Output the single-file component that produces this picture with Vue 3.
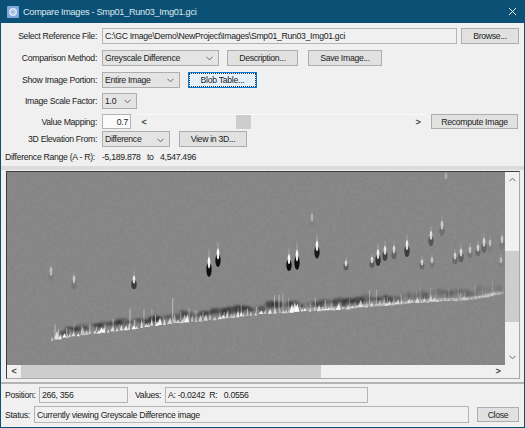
<script setup>
import { computed } from 'vue'

// isolated peaks in the image, in window coordinates: x, y, height scale, contrast
const peaks = [
  [218, 257, 1.1, 1], [209, 266, 1.2, 1], [134, 282, 0.8, 0.8], [74, 282, 0.8, 0.35], [51, 274, 0.9, 0.25],
  [289, 262, 1, 1], [297, 259, 1.2, 1], [317, 249, 1.05, 0.95], [346, 265, 0.6, 0.55], [312, 220, 0.8, 0.15],
  [372, 262, 0.65, 0.55], [378, 257, 1, 0.85], [385, 253, 0.9, 0.7], [394, 252, 0.8, 0.5], [407, 248, 1, 0.8],
  [422, 264, 0.6, 0.45], [432, 262, 0.6, 0.35], [431, 238, 0.9, 0.6], [442, 228, 0.9, 0.4], [455, 258, 0.7, 0.45],
  [461, 255, 0.8, 0.55], [470, 252, 0.7, 0.35], [478, 250, 0.7, 0.45], [484, 245, 0.9, 0.5], [490, 245, 0.7, 0.25],
  [502, 242, 0.8, 0.3], [501, 262, 0.6, 0.22], [446, 178, 0.7, 0.12],
].map(([x, y, s, c]) => ({ x, y, s, dark: c * c, light: Math.sqrt(c) * 0.95 }))

const track = [[50, 340], [87, 334], [123, 330], [173, 323], [227, 318], [260, 314], [340, 309], [407, 303], [473, 299], [505, 293]]

function bandY(x) {
  for (let i = 1; i < track.length; i++) {
    if (x <= track[i][0]) {
      const [x0, y0] = track[i - 1]
      const [x1, y1] = track[i]
      return y0 + ((x - x0) / (x1 - x0)) * (y1 - y0)
    }
  }
  return track[track.length - 1][1]
}

let seed = 23
const rnd = () => {
  seed = (seed * 16807) % 2147483647
  return seed / 2147483647
}

const fade = (x) => (x < 300 ? 1 : Math.max(0.4, 1 - ((x - 300) / 205) * 0.6))
const darkFade = (x) => (x < 340 ? 0.85 : Math.max(0.15, 0.85 - ((x - 340) / 165) * 0.7))

const darks = computed(() => {
  const out = []
  let x = 62
  while (x < 505) {
    out.push({
      x,
      y: bandY(x) - 5 - rnd() * 4,
      rx: 2 + rnd() * 5,
      ry: 1.2 + rnd() * 2.8,
      o: (0.25 + rnd() * 0.75) * darkFade(x),
    })
    x += 3 + rnd() * 5
  }
  return out
})

const wedges = computed(() => {
  const out = []
  let x = 52
  while (x < 505) {
    const y = bandY(x) + 0.5 + (rnd() - 0.5) * 1.5
    const big = x < 300 ? 1 : 0.65
    const h = (3 + rnd() * rnd() * 11) * big
    const w = 1 + rnd() * 1.7
    out.push({
      points: `${x - w},${y} ${x + w},${y} ${x + w * 0.2},${y - h}`,
      o: (0.45 + rnd() * 0.55) * fade(x),
    })
    x += 2.2 + rnd() * 3.2
  }
  return out
})

const hairs = computed(() => {
  const out = []
  let x = 55
  while (x < 505) {
    const tall = 6 + rnd() * rnd() * (x < 300 ? 22 : 14)
    out.push({
      x,
      y1: bandY(x) - 2,
      y2: bandY(x) - tall,
      o: (0.2 + rnd() * 0.5) * fade(x),
    })
    x += 3 + rnd() * 8
  }
  return out
})

const paleLine = computed(() => {
  const pts = []
  for (let x = 300; x <= 505; x += 10) pts.push(`${x},${bandY(x) - 1 + (rnd() - 0.5) * 1.5}`)
  return pts.join(' ')
})
</script>

<template>
  <div class="window">
    <div class="titlebar">
      <svg class="app-icon" viewBox="0 0 12 12">
        <rect width="12" height="12" rx="1" fill="#7fa6dd" />
        <circle cx="6" cy="6" r="4" fill="#e4edf9" />
        <path d="M6 2.5v7M2.5 6h7M3.6 3.6l4.8 4.8M8.4 3.6l-4.8 4.8" stroke="#7fa6dd" stroke-width="0.7" />
      </svg>
      <span class="title">Compare Images - Smp01_Run03_Img01.gci</span>
      <svg class="close-x" viewBox="0 0 10 10">
        <path d="M1 1l8 8M9 1l-8 8" stroke="#fff" stroke-width="1" fill="none" />
      </svg>
    </div>

    <div class="form">
      <div class="row r1">
        <label>Select Reference File:</label>
        <div class="field file">C:\GC Image\Demo\NewProject\Images\Smp01_Run03_Img01.gci</div>
        <button class="btn browse">Browse...</button>
      </div>
      <div class="row r2">
        <label>Comparison Method:</label>
        <div class="combo w-method">Greyscale Difference
          <svg viewBox="0 0 8 5"><path d="M.5.5L4 4 7.500.5" /></svg>
        </div>
        <button class="btn desc">Description...</button>
        <button class="btn save">Save Image...</button>
      </div>
      <div class="row r3">
        <label>Show Image Portion:</label>
        <div class="combo w-portion">Entire Image
          <svg viewBox="0 0 8 5"><path d="M.5.5L4 4 7.500.5" /></svg>
        </div>
        <button class="btn blob"><span>Blob Table...</span></button>
      </div>
      <div class="row r4">
        <label>Image Scale Factor:</label>
        <div class="combo w-scale">1.0
          <svg viewBox="0 0 8 5"><path d="M.5.5L4 4 7.500.5" /></svg>
        </div>
      </div>
      <div class="row r5">
        <label>Value Mapping:</label>
        <div class="field value">0.7</div>
        <div class="hscroll slider">
          <span class="arrow">&lt;</span>
          <div class="slide-track"><div class="slide-thumb"></div></div>
          <span class="arrow">&gt;</span>
        </div>
        <button class="btn recompute">Recompute Image</button>
      </div>
      <div class="row r6">
        <label>3D Elevation From:</label>
        <div class="combo w-elev">Difference
          <svg viewBox="0 0 8 5"><path d="M.5.5L4 4 7.500.5" /></svg>
        </div>
        <button class="btn view3d">View in 3D...</button>
      </div>
      <div class="row r7">
        <span class="range-label">Difference Range (A - R):</span>
        <span class="range-a">-5,189.878</span>
        <span class="range-to">to</span>
        <span class="range-b">4,547.496</span>
      </div>
    </div>

    <div class="sep"></div>

    <div class="viewer">
      <div class="canvas">
        <svg class="plot" width="498" height="193" viewBox="7 172 498 193">
          <defs>
            <filter id="grain" x="0" y="0" width="100%" height="100%">
              <feTurbulence type="fractalNoise" baseFrequency="0.3" numOctaves="2" seed="4" />
              <feColorMatrix type="matrix" values="0 0 0 0 .42  0 0 0 0 .42  0 0 0 0 .42  .9 0 0 0 -.3" />
            </filter>
            <filter id="soft" x="-30%" y="-30%" width="160%" height="160%">
              <feGaussianBlur stdDeviation="0.5" />
            </filter>
            <filter id="softer" x="-10%" y="-60%" width="120%" height="220%">
              <feGaussianBlur stdDeviation="1" />
            </filter>
          </defs>
          <rect x="7" y="172" width="498" height="193" fill="#858585" />
          <rect x="7" y="172" width="498" height="193" filter="url(#grain)" opacity="0.3" />
          <g filter="url(#softer)">
            <ellipse v-for="(d, i) in darks" :key="'d' + i" :cx="d.x" :cy="d.y" :rx="d.rx" :ry="d.ry" fill="#2c2c2c" :opacity="d.o" />
          </g>
          <polyline :points="paleLine" fill="none" stroke="#bcbcbc" stroke-width="3" opacity="0.55" filter="url(#soft)" />
          <g filter="url(#soft)">
            <line v-for="(h, i) in hairs" :key="'h' + i" :x1="h.x" :x2="h.x" :y1="h.y1" :y2="h.y2"
              stroke="#e0e0e0" stroke-width="1" :opacity="h.o" />
            <polygon v-for="(w, i) in wedges" :key="'w' + i" :points="w.points" fill="#ffffff" :opacity="w.o" />
            <g v-for="(p, i) in peaks" :key="'p' + i">
              <ellipse :cx="p.x" :cy="p.y + 3 * p.s" rx="2.600" :ry="6 * p.s" fill="#0c0c0c" :opacity="p.dark" />
              <ellipse :cx="p.x" :cy="p.y - 3 * p.s" rx="1.300" :ry="5 * p.s" fill="#ffffff" :opacity="p.light" />
              <ellipse :cx="p.x" :cy="p.y - 10 * p.s" rx="0.800" :ry="4 * p.s" fill="#b0b0b0" :opacity="p.light * 0.6" />
            </g>
          </g>
        </svg>
        <div class="vscroll">
          <svg viewBox="0 0 8 5"><path d="M.5 4.500L4 1l3.500 3.500" /></svg>
          <div class="v-track"><div class="v-thumb"></div></div>
          <svg viewBox="0 0 8 5"><path d="M.5.5L4 4 7.500.5" /></svg>
        </div>
        <div class="hscroll image-h">
          <span class="arrow">&lt;</span>
          <div class="h-track"><div class="h-thumb"></div></div>
          <span class="arrow">&gt;</span>
        </div>
        <div class="corner"></div>
      </div>
    </div>

    <div class="footer">
      <div class="row foot1">
        <label class="pos-label">Position:</label>
        <div class="field pos">266, 356</div>
        <label class="val-label">Values:</label>
        <div class="field vals">A: -0.0242&nbsp; R:&nbsp;&nbsp; 0.0556</div>
      </div>
      <div class="row foot2">
        <label class="stat-label">Status:</label>
        <div class="field status">Currently viewing Greyscale Difference image</div>
        <button class="btn close">Close</button>
      </div>
    </div>
  </div>
</template>

<style>
html, body {
  margin: 0;
  background: #f0f0f0;
}
</style>

<style scoped>
.window {
  width: 525px;
  height: 428px;
  box-sizing: border-box;
  border: 1px solid #0b5070;
  border-top: none;
  background: #f0f0f0;
  display: flex;
  flex-direction: column;
  font-family: "Liberation Sans", Arial, sans-serif;
  font-size: 8.7px;
  letter-spacing: -0.3px;
  color: #222;
  overflow: hidden;
}

.titlebar {
  height: 23px;
  flex: none;
  background: #0b5175;
  color: #dfe8ee;
  display: flex;
  align-items: center;
  padding: 0 6px;
  font-size: 9.2px;
}

.app-icon {
  width: 12px;
  height: 12px;
  margin-right: 4px;
}

.title {
  flex: 1;
}

.close-x {
  width: 9px;
  height: 9px;
  margin-right: 1px;
}

.form {
  padding-top: 5px;
  height: 143px;
  flex: none;
  box-sizing: border-box;
}

.row {
  display: flex;
  align-items: center;
}

.form label {
  width: 96px;
  text-align: right;
  margin-right: 5px;
  flex: none;
  white-space: nowrap;
}

.r1 { height: 15px; }
.r2 { height: 15px; margin-top: 7px; }
.r3 { height: 15px; margin-top: 7px; }
.r4 { height: 15px; margin-top: 6px; }
.r5 { height: 15px; margin-top: 6px; }
.r6 { height: 16px; margin-top: 2px; }
.r7 { height: 14px; margin-top: 3px; padding-left: 4px; }

.field {
  box-sizing: border-box;
  border: 1px solid #b4b4b4;
  background: #f0f0f0;
  height: 100%;
  display: flex;
  align-items: center;
  padding: 0 2px;
  white-space: pre;
}

.file {
  width: 355px;
  height: 16px;
}

.browse {
  width: 58px;
  margin-left: 4px;
}

.btn {
  box-sizing: border-box;
  height: 16px;
  border: 1px solid #adadad;
  background: #e1e1e1;
  font: inherit;
  letter-spacing: inherit;
  color: inherit;
  padding: 0;
  display: flex;
  align-items: center;
  justify-content: center;
  flex: none;
}

.combo {
  box-sizing: border-box;
  height: 16px;
  border: 1px solid #adadad;
  background: #e4e4e4;
  padding: 0 2px;
  display: flex;
  align-items: center;
  justify-content: space-between;
  flex: none;
}

.combo svg,
.vscroll svg {
  width: 7px;
  height: 5px;
  fill: none;
  stroke: #555;
  stroke-width: 1;
}

.combo svg {
  margin-right: 3px;
  margin-top: 2px;
}

.w-method { width: 117px; }
.w-portion { width: 78px; }
.w-scale { width: 35px; }
.w-elev { width: 68px; }

.desc { width: 71px; margin-left: 8px; }
.save { width: 74px; margin-left: 10px; }

.blob {
  width: 69px;
  margin-left: 8px;
  background: #e5f1fb;
  border-color: #0078d7;
}

.blob span {
  display: flex;
  align-items: center;
  justify-content: center;
  width: 100%;
  height: 100%;
  box-sizing: border-box;
  border: 1px dotted #333;
}

.value {
  width: 29px;
  background: #fbfbfb;
  justify-content: flex-end;
}

.hscroll {
  display: flex;
  align-items: center;
  background: #f0f0f0;
}

.arrow {
  width: 14px;
  text-align: center;
  flex: none;
  font-size: 9px;
  font-weight: 700;
  color: #444;
  line-height: 1;
}

.slider {
  width: 288px;
  height: 15px;
  margin-left: 6px;
  flex: none;
  border-top: 1px solid #fafafa;
  box-sizing: border-box;
}

.slide-track {
  flex: 1;
  height: 100%;
  display: flex;
}

.slide-thumb {
  width: 15px;
  margin-left: 85px;
  background: #cdcdcd;
}

.recompute {
  width: 87px;
  height: 15px;
  margin-left: 6px;
}

.view3d {
  width: 68px;
  margin-left: 9px;
}

.range-label { width: 97px; white-space: nowrap; }
.range-a { width: 45px; }
.range-to { width: 13px; }

.sep {
  height: 4px;
  flex: none;
  background: #dcdcdc;
  margin-bottom: 1px;
}

.viewer {
  flex: none;
  padding: 0 0 0 5px;
}

.canvas {
  width: 514px;
  height: 208px;
  box-sizing: border-box;
  border: 1px solid #a8a8a8;
  border-left: 1px solid #3c3c3c;
  border-top-color: #3c3c3c;
  display: grid;
  grid-template-columns: 498px 1fr;
  grid-template-rows: 193px 1fr;
  background: #f0f0f0;
}

.plot {
  display: block;
}

.vscroll {
  display: flex;
  flex-direction: column;
  align-items: center;
  background: #f0f0f0;
}

.vscroll svg {
  flex: none;
  margin: 5px 0;
}

.v-track {
  flex: 1;
  width: 100%;
}

.v-thumb {
  height: 71px;
  margin-top: 64px;
  background: #cdcdcd;
}

.image-h {
  height: 100%;
}

.h-track {
  flex: 1;
  height: 100%;
}

.h-thumb {
  width: 300px;
  height: 100%;
  background: #cdcdcd;
}

.footer {
  flex: none;
  margin-top: 3px;
  border-top: 2px solid #b4b4b4;
  padding-top: 3px;
}

.foot1 {
  height: 16px;
  padding-left: 4px;
}

.foot2 {
  height: 17px;
  margin-top: 3px;
  padding-left: 4px;
}

.pos-label { width: 31px; margin-right: 3px; }
.pos { width: 89px; }
.val-label { width: 25px; margin-left: 7px; margin-right: 5px; }
.vals { width: 203px; }
.stat-label { width: 27px; margin-right: 2px; }
.status { width: 435px; }

.close {
  width: 42px;
  height: 15px;
  margin-left: 8px;
}
</style>
